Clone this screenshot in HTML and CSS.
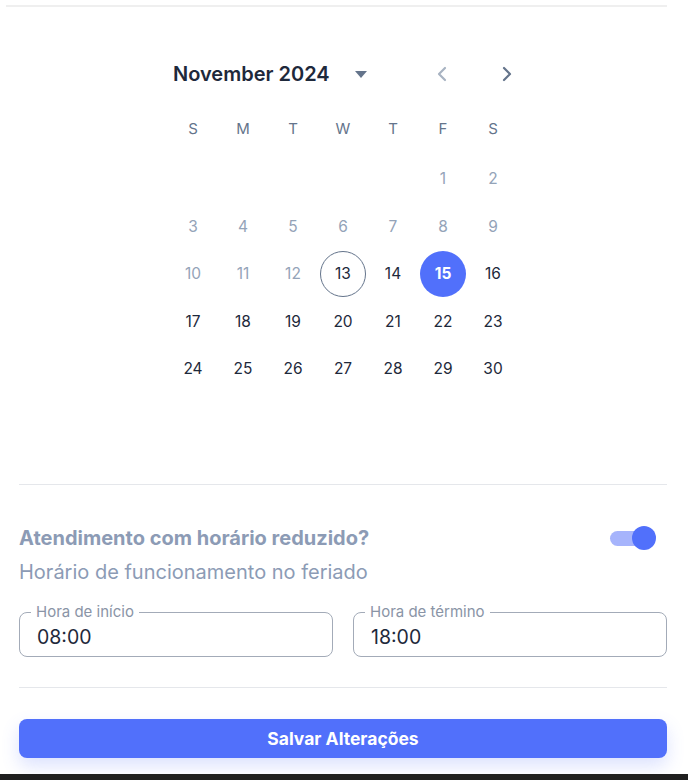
FILE: index.html
```html
<!DOCTYPE html>
<html lang="pt-BR">
<head>
    <meta charset="UTF-8">
    <title>Feriado</title>
    <link rel="stylesheet" href="styles.css">
</head>
<body>
    <div class="top-rule"></div>
    <div class="page">
        <div class="calendar">
            <div class="cal-header">
                <span class="cal-title">November 2024</span>
                <button class="cal-switch" aria-label="Trocar ano">
                    <svg width="12" height="7" viewBox="0 0 12 7"><path d="M0 0h12L6 7z" fill="#64748b"/></svg>
                </button>
                <div class="cal-nav">
                    <button class="nav-btn disabled" aria-label="Anterior">
                        <svg width="12" height="16" viewBox="0 0 12 16"><path d="M9 2L3 8l6 6" fill="none" stroke="currentColor" stroke-width="2.2" stroke-linecap="round" stroke-linejoin="round"/></svg>
                    </button>
                    <button class="nav-btn" aria-label="Próximo">
                        <svg width="12" height="16" viewBox="0 0 12 16"><path d="M3 2l6 6-6 6" fill="none" stroke="currentColor" stroke-width="2.2" stroke-linecap="round" stroke-linejoin="round"/></svg>
                    </button>
                </div>
            </div>
            <div class="weekdays">
                <span>S</span><span>M</span><span>T</span><span>W</span><span>T</span><span>F</span><span>S</span>
            </div>
            <div class="days">
                <span></span><span></span><span></span><span></span><span></span>
                <span class="day off">1</span><span class="day off">2</span>
                <span class="day off">3</span><span class="day off">4</span><span class="day off">5</span><span class="day off">6</span><span class="day off">7</span><span class="day off">8</span><span class="day off">9</span>
                <span class="day off">10</span><span class="day off">11</span><span class="day off">12</span><span class="day today">13</span><span class="day">14</span><span class="day selected">15</span><span class="day">16</span>
                <span class="day">17</span><span class="day">18</span><span class="day">19</span><span class="day">20</span><span class="day">21</span><span class="day">22</span><span class="day">23</span>
                <span class="day">24</span><span class="day">25</span><span class="day">26</span><span class="day">27</span><span class="day">28</span><span class="day">29</span><span class="day">30</span>
            </div>
        </div>

        <div class="rule"></div>

        <div class="reduced">
            <div class="reduced-row">
                <h3>Atendimento com horário reduzido?</h3>
                <span class="switch"><span class="track"></span><span class="thumb"></span></span>
            </div>
            <p class="reduced-sub">Horário de funcionamento no feriado</p>
            <div class="fields">
                <div class="field">
                    <label>Hora de início</label>
                    <input type="text" value="08:00">
                </div>
                <div class="field">
                    <label>Hora de término</label>
                    <input type="text" value="18:00">
                </div>
            </div>
        </div>

        <div class="rule rule-bottom"></div>

        <button class="save">Salvar Alterações</button>
    </div>
    <div class="bottom-bar"></div>
</body>
</html>
```

FILE: styles.css
```css
body {margin: 0; background: #fff; font-family: Inter, 'Noto Sans', sans-serif; color: #1e293b}
.top-rule {height: 2px; background: #efefef; margin: 5px 21px 0 6px}
.page {padding: 0 21px 0 19px}
.calendar {padding-top: 47px; height: 430px; box-sizing: border-box}
.cal-header {display: flex; align-items: center; width: 360px; height: 40px; margin: 0 auto; box-sizing: border-box; padding-left: 10px}
.cal-title {font-size: 20px; font-weight: 600; color: #1e293b}
.cal-switch {width: 24px; height: 24px; margin-left: 19px; border: none; background: none; padding: 0; display: flex; align-items: center; justify-content: center}
.cal-nav {margin-left: auto; display: flex; gap: 33px}
.nav-btn {width: 32px; height: 32px; border: none; background: none; padding: 0; display: flex; align-items: center; justify-content: center; color: #64748b}
.nav-btn.disabled {color: #a8b3c2}
.weekdays {display: grid; grid-template-columns: repeat(7, 50px); width: 350px; margin: 14px auto 0; height: 40px; align-items: center}
.weekdays span {text-align: center; font-size: 15px; color: #64748b}
.days {display: grid; grid-template-columns: repeat(7, 50px); grid-auto-rows: 47.5px; width: 350px; margin: 7px auto 0}
.day {width: 46px; height: 46px; margin: auto; border-radius: 50%; display: flex; align-items: center; justify-content: center; font-size: 15.5px; color: #1e293b; box-sizing: border-box}
.day.off {color: #94a3b8}
.day.today {border: 1px solid #64748b}
.day.selected {background: #5170fb; color: #fff; font-weight: 700}
.rule {border-top: 1px solid #e5e7eb; margin-top: 47px}
.reduced {padding-top: 41px}
.reduced-row {display: flex; align-items: center; justify-content: space-between; height: 24px}
.reduced-row h3 {margin: 0; font-size: 20px; font-weight: 700; color: #8c9bb5}
.switch {position: relative; width: 46px; height: 24px; margin-right: 11px}
.track {position: absolute; left: 0; top: 5px; width: 40px; height: 15px; border-radius: 8px; background: #a6b4fc}
.thumb {position: absolute; right: 0; top: 0; width: 24px; height: 24px; border-radius: 50%; background: #5170fb}
.reduced-sub {margin: 10px 0 0; font-size: 20px; line-height: 24px; color: #8c9bb5}
.fields {display: flex; gap: 20px; margin-top: 28px}
.field {position: relative; flex: 1}
.field label {position: absolute; left: 12px; top: -9px; padding: 0 5px; background: #fff; font-size: 15px; line-height: 18px; color: #8a94a6}
.field input {width: 100%; height: 45px; box-sizing: border-box; border: 1px solid #a3abb8; border-radius: 8px; padding: 4px 0 0 17px; font-family: inherit; font-size: 19.5px; color: #1e293b; outline: none}
.rule-bottom {margin-top: 30px}
.save {display: block; width: 100%; height: 39px; margin-top: 31px; border: none; border-radius: 8px; background: #5170fb; color: #fff; font-family: inherit; font-size: 17.5px; font-weight: 700; box-shadow: 0 8px 18px rgba(81,112,251,0.2)}
.bottom-bar {height: 10px; margin-top: 16px; background: #1f1f1f}
```
